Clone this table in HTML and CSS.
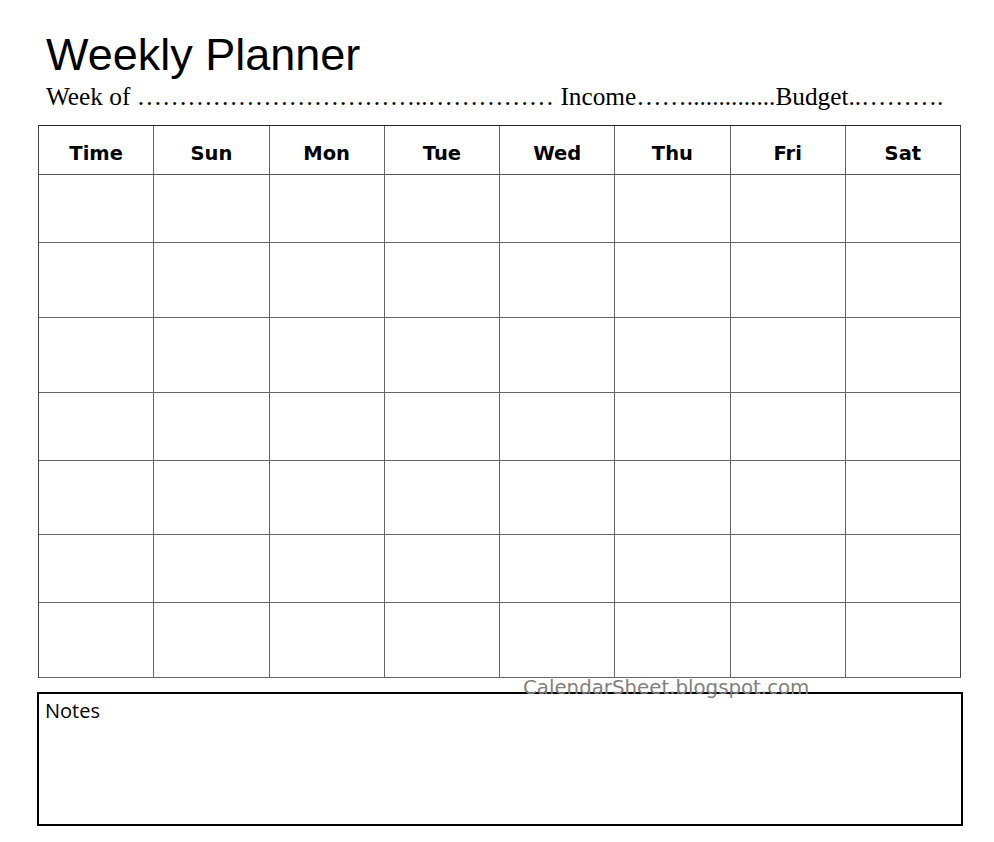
FILE: index.html
```html
<!DOCTYPE html>
<html lang="en">
<head>
<meta charset="utf-8">
<title>Weekly Planner</title>
<link rel="stylesheet" href="styles.css">
</head>
<body>
<div class="page">
  <h1 class="title">Weekly Planner</h1>
  <p class="subline">Week of ……………………………..…………… Income……..............Budget..……….</p>
  <div class="grid">
    <div class="cell head">Time</div>
    <div class="cell head">Sun</div>
    <div class="cell head">Mon</div>
    <div class="cell head">Tue</div>
    <div class="cell head">Wed</div>
    <div class="cell head">Thu</div>
    <div class="cell head">Fri</div>
    <div class="cell head">Sat</div>

    <div class="cell"></div><div class="cell"></div><div class="cell"></div><div class="cell"></div><div class="cell"></div><div class="cell"></div><div class="cell"></div><div class="cell"></div>
    <div class="cell"></div><div class="cell"></div><div class="cell"></div><div class="cell"></div><div class="cell"></div><div class="cell"></div><div class="cell"></div><div class="cell"></div>
    <div class="cell"></div><div class="cell"></div><div class="cell"></div><div class="cell"></div><div class="cell"></div><div class="cell"></div><div class="cell"></div><div class="cell"></div>
    <div class="cell"></div><div class="cell"></div><div class="cell"></div><div class="cell"></div><div class="cell"></div><div class="cell"></div><div class="cell"></div><div class="cell"></div>
    <div class="cell"></div><div class="cell"></div><div class="cell"></div><div class="cell"></div><div class="cell"></div><div class="cell"></div><div class="cell"></div><div class="cell"></div>
    <div class="cell"></div><div class="cell"></div><div class="cell"></div><div class="cell"></div><div class="cell"></div><div class="cell"></div><div class="cell"></div><div class="cell"></div>
    <div class="cell"></div><div class="cell"></div><div class="cell"></div><div class="cell"></div><div class="cell"></div><div class="cell"></div><div class="cell"></div><div class="cell"></div>
  </div>
  <div class="notes">
    <span class="notes-label">Notes</span>
    <span class="watermark">CalendarSheet.blogspot.com</span>
  </div>
</div>
</body>
</html>
```

FILE: styles.css
```css
html, body {
  margin: 0;
  padding: 0;
  background: #fff;
}

.page {
  width: 994px;
  height: 842px;
  padding-top: 32px;
  box-sizing: border-box;
  color: #000;
}

.title {
  margin: 0 0 0 46px;
  font-family: "Liberation Sans", Arial, sans-serif;
  font-weight: normal;
  font-size: 45px;
  line-height: 45px;
}

.subline {
  margin: 7px 0 0 46px;
  font-family: "Liberation Serif", "Times New Roman", serif;
  font-size: 25.3px;
  line-height: 24px;
  white-space: nowrap;
}

.grid {
  margin: 17px 0 0 38px;
  width: 923px;
  box-sizing: border-box;
  display: grid;
  grid-template-columns: repeat(8, 1fr);
  grid-template-rows: 49px 68px 75px 75px 68px 74px 68px 75px;
  border-top: 1px solid #222;
  border-left: 1px solid #444;
}

.cell {
  border-right: 1px solid #666;
  border-bottom: 1px solid #666;
}

.cell:nth-child(8n) {
  border-right-color: #444;
}

.head {
  padding-top: 16px;
  text-align: center;
  font-family: "DejaVu Sans", Verdana, sans-serif;
  font-weight: bold;
  font-size: 19.5px;
  line-height: 24px;
  border-bottom-color: #555;
}

.notes {
  position: relative;
  margin: 14px 0 0 37px;
  width: 926px;
  height: 134px;
  box-sizing: border-box;
  border: 2px solid #000;
  padding: 5px 6px;
}

.notes-label {
  display: block;
  font-family: "Open Sans", "Segoe UI", sans-serif;
  font-size: 20px;
  line-height: 24px;
}

.watermark {
  position: absolute;
  left: 484px;
  top: -16px;
  font-family: "DejaVu Sans", Verdana, sans-serif;
  font-size: 19.8px;
  line-height: 20px;
  color: #808080;
  white-space: nowrap;
}
```
